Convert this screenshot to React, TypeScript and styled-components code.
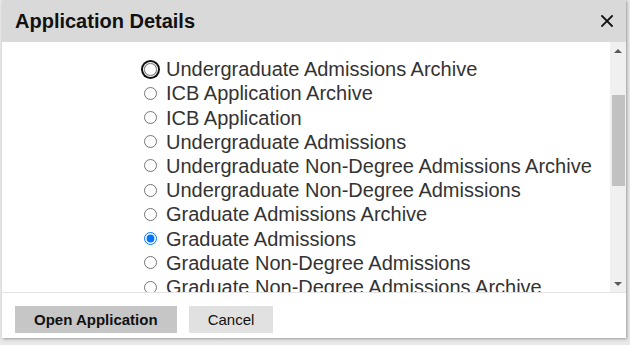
import React, { useLayoutEffect, useRef } from 'react';
import styled, { createGlobalStyle } from 'styled-components';

const GlobalStyle = createGlobalStyle`
  html, body {
    margin: 0;
    padding: 0;
    background: #e9e9e9;
    font-family: "Liberation Sans", Arial, sans-serif;
  }
`;

const Page = styled.div`
  width: 630px;
  height: 345px;
  overflow: hidden;
  display: flex;
  align-items: flex-start;
  background: #e9e9e9;
`;

const Dialog = styled.div`
  margin-left: 2px;
  width: 624px;
  height: 338px;
  background: #fff;
  display: flex;
  flex-direction: column;
  box-shadow: 1px 1px 3px rgba(0, 0, 0, 0.35);
`;

const Header = styled.div`
  height: 42px;
  flex: none;
  background: #d9d9d9;
  display: flex;
  align-items: center;
  justify-content: space-between;
  padding: 0 12px 0 13px;
`;

const Title = styled.h2`
  margin: 0;
  font-size: 20px;
  font-weight: bold;
  color: #111;
`;

const CloseButton = styled.button`
  border: 0;
  background: none;
  padding: 0;
  width: 14px;
  height: 14px;
  display: flex;
  align-items: center;
  justify-content: center;
  cursor: pointer;
`;

const BodyRow = styled.div`
  flex: 1;
  min-height: 0;
  display: flex;
`;

const Scroller = styled.div`
  flex: 1;
  overflow: hidden;
  color: #333;
  font-size: 20px;
  line-height: 24px;
`;

const Content = styled.div`
  padding: 16px 0 8px;
`;

const Intro = styled.p`
  margin: 0 20px 20px 142px;
`;

const GroupLabel = styled.div`
  margin: 0 0 15px 142px;
`;

const List = styled.div`
  display: flex;
  flex-direction: column;
  padding-left: 142px;
`;

const Option = styled.label`
  display: flex;
  align-items: center;
  gap: 9px;
  height: 24.22px;
  white-space: nowrap;
`;

const RadioWrap = styled.span<{ $focused?: boolean }>`
  display: inline-flex;
  flex: none;
  width: 13px;
  height: 13px;
  border-radius: 50%;
  box-shadow: ${(p) => (p.$focused ? '0 0 0 1px #fff, 0 0 0 3px #111' : 'none')};
`;

const Radio = styled.input`
  margin: 0;
  width: 13px;
  height: 13px;
  outline: none;
`;

const ScrollBar = styled.div`
  width: 16px;
  flex: none;
  background: #f0f0f0;
  display: flex;
  flex-direction: column;
`;

const ArrowButton = styled.div<{ $down?: boolean }>`
  height: 17px;
  flex: none;
  display: flex;
  align-items: center;
  justify-content: center;
  padding-right: 1px;
  &::before {
    content: '';
    width: 0;
    height: 0;
    border-left: 4px solid transparent;
    border-right: 4px solid transparent;
    ${(p) => (p.$down ? 'border-top: 4px solid #5a5a5a;' : 'border-bottom: 4px solid #5a5a5a;')}
  }
`;

const Track = styled.div`
  flex: 1;
  display: flex;
  flex-direction: column;
`;

const Thumb = styled.div`
  margin: 0 1px 0 2px;
  background: #c1c1c1;
`;

const Footer = styled.div`
  flex: none;
  border-top: 1px solid #e4e4e4;
  padding: 13px 13px 5px;
  display: flex;
  gap: 12px;
`;

const Button = styled.button<{ $primary?: boolean }>`
  height: 27px;
  border: 0;
  padding: 0 19px;
  font-family: "Liberation Sans", Arial, sans-serif;
  font-size: 15px;
  font-weight: ${(p) => (p.$primary ? 'bold' : 'normal')};
  color: #111;
  background: ${(p) => (p.$primary ? '#c6c6c6' : '#e1e1e1')};
  min-width: ${(p) => (p.$primary ? '161px' : '84px')};
  cursor: pointer;
`;

const applications = [
  'Undergraduate Admissions Archive',
  'ICB Application Archive',
  'ICB Application',
  'Undergraduate Admissions',
  'Undergraduate Non-Degree Admissions Archive',
  'Undergraduate Non-Degree Admissions',
  'Graduate Admissions Archive',
  'Graduate Admissions',
  'Graduate Non-Degree Admissions',
  'Graduate Non-Degree Admissions Archive',
  'Law School Admissions',
  'Law School Admissions Archive',
  'Medical School Admissions',
  'Medical School Admissions Archive',
  'Visiting Student Application',
  'Visiting Student Application Archive',
  'Summer Session Application',
  'Summer Session Application Archive',
  'Continuing Education Application',
  'Continuing Education Application Archive',
];

const SCROLL_TOP = 108;

const App = () => {
  const scrollRef = useRef<HTMLDivElement>(null);

  useLayoutEffect(() => {
    if (scrollRef.current) scrollRef.current.scrollTop = SCROLL_TOP;
  }, []);

  return (
    <>
      <GlobalStyle />
      <Page>
        <Dialog role="dialog" aria-label="Application Details">
          <Header>
            <Title>Application Details</Title>
            <CloseButton type="button" aria-label="Close">
              <svg width="12" height="12" viewBox="0 0 12 12">
                <path d="M1 1 L11 11 M11 1 L1 11" stroke="#111" strokeWidth="1.8" strokeLinecap="square" />
              </svg>
            </CloseButton>
          </Header>
          <BodyRow>
            <Scroller ref={scrollRef}>
              <Content>
                <Intro>Choose which application to open for this applicant record.</Intro>
                <GroupLabel>Study Level:</GroupLabel>
                <List>
                  {applications.map((name, i) => (
                    <Option key={name}>
                      <RadioWrap $focused={i === 0}>
                        <Radio type="radio" name="application" defaultChecked={name === 'Graduate Admissions'} />
                      </RadioWrap>
                      {name}
                    </Option>
                  ))}
                </List>
              </Content>
            </Scroller>
            <ScrollBar aria-hidden="true">
              <ArrowButton />
              <Track>
                <Thumb style={{ marginTop: 36, height: 91 }} />
              </Track>
              <ArrowButton $down />
            </ScrollBar>
          </BodyRow>
          <Footer>
            <Button type="button" $primary>
              Open Application
            </Button>
            <Button type="button">Cancel</Button>
          </Footer>
        </Dialog>
      </Page>
    </>
  );
};

export default App;
